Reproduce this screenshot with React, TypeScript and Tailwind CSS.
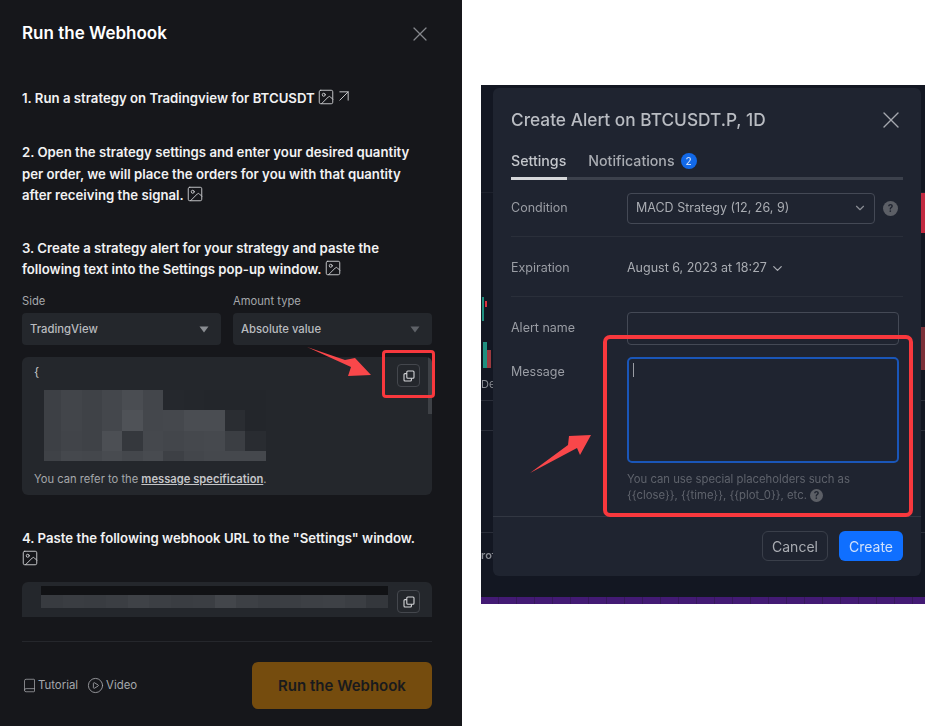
import React from "react";
import { ArrowUpRight, Book, ChevronDown, CirclePlay, Image as ImageIcon, X } from "lucide-react";

const codeMosaic = [
  ["#3d4045", "#42454a", "#3f4247", "#44474c", "#4a4d52", "#43464b", "#25282d", "#24272c", "#23262b", "#23262b", "#23262b"],
  ["#3d4045", "#42454a", "#3f4247", "#44474c", "#4f5257", "#44474c", "#45484d", "#4a4d52", "#4a4d52", "#2a2d32", "#23262b"],
  ["#3d4045", "#414449", "#3f4247", "#4c4f54", "#35383d", "#45484d", "#43464b", "#45484d", "#46494e", "#3b3e43", "#292c31"],
  ["#3f4247", "#45484d", "#44474c", "#484b50", "#44474c", "#484b50", "#3d4045", "#43464b", "#45484d", "#45484d", "#45484d"],
];
const columnWidths = [17, 21, 20, 20, 21, 20, 21, 20, 21, 20, 21];
const rowHeights = [20, 21, 20, 10];

const urlBand = ["#383b40", "#3a3d42", "#393c41", "#3b3e43", "#3f4247", "#3c3f44", "#3a3d42", "#3b3e43", "#43464b", "#3d4045", "#3a3d42", "#3b3e43", "#3d4045", "#3e4146", "#3b3e43", "#34373c"];

const CopyButton = () => (
  <div className="w-[23px] h-[23px] rounded-[4px] border border-[#44474d] flex items-center justify-center">
    <svg width="12" height="12" viewBox="0 0 12 12" fill="none" stroke="#d4d5d8" strokeWidth="1.1">
      <rect x="3.8" y="1" width="7.2" height="7.2" rx="1" />
      <path d="M3.8 3.6H2a1 1 0 0 0-1 1V10a1 1 0 0 0 1 1h5.4a1 1 0 0 0 1-1V8.2" />
    </svg>
  </div>
);

const Pic = () => (
  <ImageIcon size={18} strokeWidth={1.3} className="inline-block -mx-[1px] -my-[4px] text-[#c4c5c8] align-[1px]" />
);

const SelectBox = ({ label, value, dim }: { label: string; value: string; dim?: boolean }) => (
  <div className="flex-1 min-w-0">
    <div className="text-[11.2px] leading-[16px] text-[#a5a7ab]">{label}</div>
    <div className="mt-[4px] h-[32px] rounded-[4px] bg-[#24272c] pl-[8px] pr-[12px] flex items-center justify-between">
      <span className="text-[11.3px] font-medium text-[#b9bbbf]">{value}</span>
      <svg width="10" height="7" viewBox="0 0 10 7" className={dim ? "fill-[#5f6268]" : "fill-[#8a8d92]"}>
        <path d="M0.5 0.5h9L5 6.5z" />
      </svg>
    </div>
  </div>
);

const WebhookPanel = () => (
  <div className="w-[462px] h-[726px] shrink-0 bg-[#16171b] pl-[22px] pr-[30px] flex flex-col font-['Inter',sans-serif] text-white">
    <div className="h-[68px] shrink-0 flex items-center justify-between">
      <h1 className="text-[17px] font-semibold">Run the Webhook</h1>
      <X size={24} strokeWidth={1.2} className="text-[#85878c]" />
    </div>

    <div className="pt-[20px] text-[13.2px] leading-[21.4px] font-semibold text-[#f2f2f3]">
      <p>
        1. Run a strategy on Tradingview for BTCUSDT <Pic />{" "}
        <ArrowUpRight size={20} strokeWidth={1.2} className="inline-block -mx-[3px] -my-[4px] text-[#c4c5c8] align-[1px]" />
      </p>
      <p className="mt-[33px]">
        2. Open the strategy settings and enter your desired quantity per order, we will place the orders for you with that quantity after receiving the signal. <Pic />
      </p>
      <p className="mt-[31px]">
        3. Create a strategy alert for your strategy and paste the following text into the Settings pop-up window. <Pic />
      </p>
    </div>

    <div className="mt-[13px] flex gap-[12px]">
      <SelectBox label="Side" value="TradingView" />
      <SelectBox label="Amount type" value="Absolute value" dim />
    </div>

    <div className="relative mt-[12px] h-[138px] shrink-0 rounded-[6px] bg-[#24272c] overflow-hidden">
      <div className="h-[104px] pl-[12px] pt-[6px] overflow-hidden">
        <div className="text-[12px] leading-[18px] text-[#c4c5c8]">{"{"}</div>
        <div className="ml-[10px] mt-[9px]">
          {codeMosaic.map((row, r) => (
            <div key={r} className="flex" style={{ height: rowHeights[r] }}>
              {row.map((color, c) => (
                <div key={c} style={{ width: columnWidths[c], backgroundColor: color }} />
              ))}
            </div>
          ))}
        </div>
      </div>
      <div className="absolute right-0 top-0 w-[4px] h-[57px] bg-[#3e4146]" />
      <div className="absolute right-[12px] top-[7px]">
        <CopyButton />
      </div>
      <div className="h-[36px] pl-[12px] flex items-center text-[11.2px] text-[#a5a7ab]">
        <span>
          You can refer to the <span className="font-semibold text-[#c4c5c8] underline">message specification</span>.
        </span>
      </div>
    </div>

    <p className="mt-[33px] text-[13.2px] leading-[21px] font-semibold text-[#f2f2f3]">
      4. Paste the following webhook URL to the "Settings" window. <br />
      <Pic />
    </p>

    <div className="relative mt-[12px] h-[35px] shrink-0 rounded-t-[6px] bg-[#24272c] px-[19px] pt-[4px]">
      <div className="h-[9px] w-[347px] bg-[#111215]" />
      <div className="flex h-[13px] w-[347px]">
        {urlBand.map((color, i) => (
          <div key={i} className="flex-1" style={{ backgroundColor: color }} />
        ))}
      </div>
      <div className="absolute right-[12px] top-[8px]">
        <CopyButton />
      </div>
    </div>

    <div className="mt-[24px] border-t border-[#25272c]" />

    <div className="mt-[20px] flex items-center justify-between">
      <div className="flex items-center text-[11.4px] text-[#a5a7ab]">
        <Book size={15} strokeWidth={1.2} className="mr-[1px]" />
        <span className="mr-[9px]">Tutorial</span>
        <CirclePlay size={17} strokeWidth={1.2} className="mr-[2px]" />
        <span>Video</span>
      </div>
      <button className="w-[180px] h-[47px] rounded-[6px] bg-[#754c0e] text-[15px] font-semibold text-[#191a1d]">
        Run the Webhook
      </button>
    </div>
  </div>
);

const FormRow = ({ label, className, labelClassName, children }: { label: string; className?: string; labelClassName?: string; children?: React.ReactNode }) => (
  <div className={`flex ${className ?? ""}`}>
    <div className={`w-[116px] shrink-0 text-[12.5px] text-[#9a9da4] ${labelClassName ?? ""}`}>{label}</div>
    {children}
  </div>
);

const Help = ({ size }: { size: number }) => (
  <span
    className="inline-flex items-center justify-center rounded-full bg-[#5c5f66] text-[#1f2430] text-[10px] font-bold"
    style={{ width: size, height: size }}
  >
    ?
  </span>
);

const AlertShot = () => (
  <div className="relative w-[444px] h-[519px] bg-[#131722] overflow-hidden font-['Inter',sans-serif] blur-[0.6px]">
    {/* chart bits showing round the dialog */}
    <div className="absolute left-[1px] top-[212px] w-[2px] h-[24px] bg-[#1f8f7f]" />
    <div className="absolute left-[4px] top-[216px] w-[2px] h-[6px] bg-[#d8323f]" />
    <div className="absolute left-[2px] top-[257px] w-[4px] h-[26px] bg-[#1f8f7f]" />
    <div className="absolute left-[6px] top-[265px] w-[4px] h-[18px] bg-[#9c3a3f]" />
    <div className="absolute left-0 top-[291px] text-[11px] text-[#8a8d94]">De</div>
    <div className="absolute left-0 top-[462px] text-[11px] font-semibold text-[#8a8d94]">rof</div>
    <div className="absolute left-0 right-0 top-[107px] border-t border-[#1e222d]" />
    <div className="absolute left-0 right-0 top-[315px] border-t border-[#2a2e39]" />
    <div className="absolute left-0 right-0 top-[345px] border-t border-[#2a2e39]" />
    <div className="absolute left-0 right-0 top-[447px] border-t border-[#2a2e39]" />
    <div className="absolute right-0 top-[108px] w-[4px] h-[40px] bg-[#c22a40]" />
    <div className="absolute right-0 top-[242px] w-[4px] h-[43px] bg-[#7c3038]" />
    <div className="absolute left-0 right-0 bottom-0 h-[7px] bg-[repeating-linear-gradient(90deg,#431a74_0px,#431a74_17px,#36185c_17px,#36185c_18px)]" />

    <div className="absolute left-[12px] top-[3px] w-[428px] h-[488px] rounded-[6px] bg-[#1f2430] flex flex-col">
      <div className="h-[64px] shrink-0 pl-[18px] pr-[16px] flex items-center justify-between">
        <h2 className="text-[17.3px] font-medium text-[#b9bcc2]">Create Alert on BTCUSDT.P, 1D</h2>
        <X size={28} strokeWidth={1.2} className="text-[#a5a8ae]" />
      </div>
      <div className="mx-[18px] h-[25px] shrink-0 flex items-start gap-[22px] text-[14.2px] font-medium leading-[18px]">
        <span className="text-[#c4c7cc]">Settings</span>
        <span className="flex items-center gap-[6px] text-[#a9acb2]">
          Notifications
          <span className="w-[16px] h-[16px] rounded-full bg-[#1269e8] text-[10px] text-[#c9dcfa] flex items-center justify-center">2</span>
        </span>
      </div>
      <div className="mx-[18px] h-[3px] shrink-0 bg-[#3c414c]">
        <div className="w-[56px] h-full bg-[#d5d7da]" />
      </div>

      <FormRow label="Condition" className="mx-[18px] mt-[12px] items-center h-[32px]">
        <div className="w-[248px] h-[31px] rounded-[4px] border border-[#444955] pl-[8px] pr-[7px] flex items-center justify-between text-[12.5px] text-[#a9acb2]">
          MACD Strategy (12, 26, 9)
          <ChevronDown size={14} className="text-[#8a8d94]" />
        </div>
        <span className="ml-[8px] flex">
          <Help size={15} />
        </span>
      </FormRow>
      <div className="mx-[18px] mt-[12px] border-t border-[#2a2f3a]" />

      <FormRow label="Expiration" className="mx-[18px] mt-[22px] items-center h-[18px]">
        <span className="text-[12.5px] text-[#a9acb2]">August 6, 2023 at 18:27</span>
        <ChevronDown size={15} className="ml-[3px] text-[#a9acb2]" />
      </FormRow>
      <div className="mx-[18px] mt-[19px] border-t border-[#2a2f3a]" />

      <FormRow label="Alert name" className="mx-[18px] mt-[15px] items-center h-[33px]">
        <div className="w-[272px] h-[33px] rounded-[4px] border border-[#444955]" />
      </FormRow>

      <FormRow label="Message" className="mx-[18px] mt-[12px]" labelClassName="pt-[6px]">
        <div className="w-[272px]">
          <div className="h-[106px] rounded-[5px] border-2 border-[#1a56b8] pl-[4px] pt-[4px]">
            <div className="w-[1px] h-[14px] bg-[#9a9da4]" />
          </div>
          <p className="mt-[8px] text-[11.3px] leading-[16px] text-[#5f636c]">
            You can use special placeholders such as
            <br />
            {"{{close}}, {{time}}, {{plot_0}}, etc."} <Help size={13} />
          </p>
        </div>
      </FormRow>

      <div className="mt-[13px] border-t border-[#323742]" />
      <div className="mt-[14px] mr-[18px] flex justify-end gap-[11px]">
        <button className="w-[66px] h-[30px] rounded-[6px] border border-[#3a3f4a] text-[14px] text-[#a9acb2]">Cancel</button>
        <button className="w-[64px] h-[30px] rounded-[6px] bg-[#0f6fff] text-[14px] text-[#cfe0fb]">Create</button>
      </div>
    </div>
  </div>
);

const Annotations = () => (
  <>
    <div className="absolute left-[382px] top-[350px] w-[53px] h-[48px] rounded-[4px] border-[3px] border-[#f8383d]" />
    <svg className="absolute left-[300px] top-[340px]" width="80" height="45" viewBox="300 340 80 45" fill="#f9474a">
      <path d="M307 347L345 360L355 358L371 375L348 376L351 367Z" />
    </svg>
    <div className="absolute left-[603px] top-[335px] w-[310px] h-[182px] rounded-[7px] border-[4px] border-[#f8383d]" />
    <svg className="absolute left-[525px] top-[430px]" width="72" height="48" viewBox="525 430 72 48" fill="#f9474a">
      <path d="M530 473L568 445L569 436L591 435L580 455L577 448Z" />
    </svg>
  </>
);

export default function App() {
  return (
    <div className="relative w-[925px] h-[726px] bg-white flex overflow-hidden">
      <WebhookPanel />
      <div className="pl-[19px] pt-[85px]">
        <AlertShot />
      </div>
      <Annotations />
    </div>
  );
}
